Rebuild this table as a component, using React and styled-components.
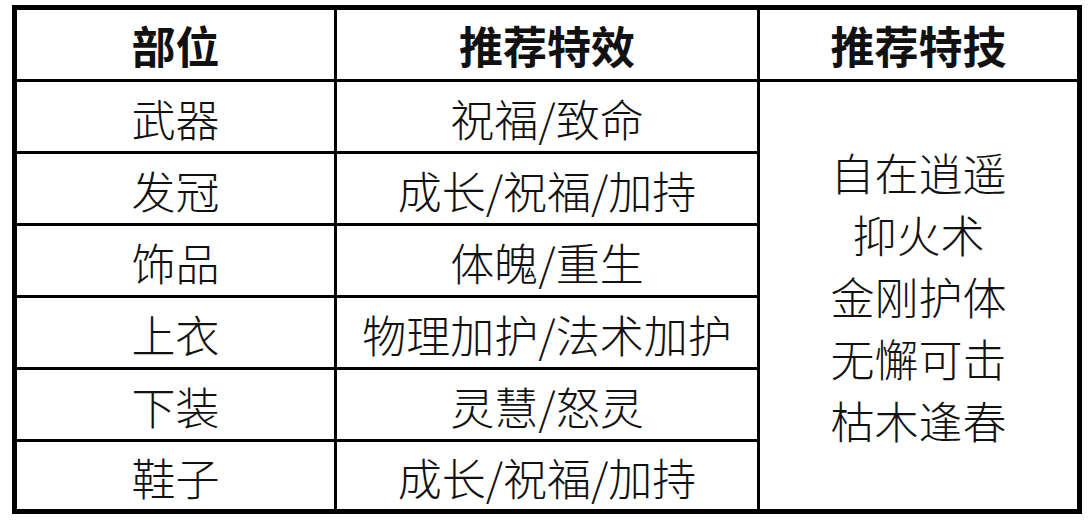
import React from 'react';
import styled, { createGlobalStyle } from 'styled-components';

const GlobalStyle = createGlobalStyle`
    html, body {
        margin:0;
        padding:0;
        background:#ffffff;
    }
    body {
        font-family:"Noto Sans CJK SC", "Noto Sans", sans-serif;
        color:#111;
    }
`

const Page = styled.div`
    width:1090px;
    height:524px;
    padding:5px 0 0 12px;
    box-sizing:border-box;
`
const Table = styled.div`
    width:1070px;
    height:509px;
    box-sizing:border-box;
    border:5px solid #000;
    background:#000;
    display:grid;
    grid-template-columns:317px 420px 317px;
    grid-template-rows:repeat(6, 69px) 67px;
    gap:3px;
`
const Cell = styled.div`
    background:#fff;
    display:flex;
    align-items:center;
    justify-content:center;
    font-size:44px;
    line-height:1;
    font-weight:${props => props.head ? 700 : 300};
    white-space:nowrap;
    padding-top:${props => props.head ? '0px' : '2px'};
    box-sizing:border-box;
`
const Merged = styled(Cell)`
    grid-column:3;
    grid-row:2 / span 6;
    flex-direction:column;
    line-height:62px;
    padding-top:0;
`

const rows = [
    ['武器', '祝福/致命'],
    ['发冠', '成长/祝福/加持'],
    ['饰品', '体魄/重生'],
    ['上衣', '物理加护/法术加护'],
    ['下装', '灵慧/怒灵'],
    ['鞋子', '成长/祝福/加持'],
];

const skills = ['自在逍遥', '抑火术', '金刚护体', '无懈可击', '枯木逢春'];

const App = () => {
  return (
    <Page>
        <GlobalStyle />
        <Table>
            <Cell head>部位</Cell>
            <Cell head>推荐特效</Cell>
            <Cell head>推荐特技</Cell>
            {rows.map((r, i) => (
                <React.Fragment key={r[0]}>
                    <Cell style={{ gridColumn: 1, gridRow: i + 2 }}>{r[0]}</Cell>
                    <Cell style={{ gridColumn: 2, gridRow: i + 2 }}>{r[1]}</Cell>
                </React.Fragment>
            ))}
            <Merged>
                {skills.map(s => <span key={s}>{s}</span>)}
            </Merged>
        </Table>
    </Page>
  );
};

export default App;
